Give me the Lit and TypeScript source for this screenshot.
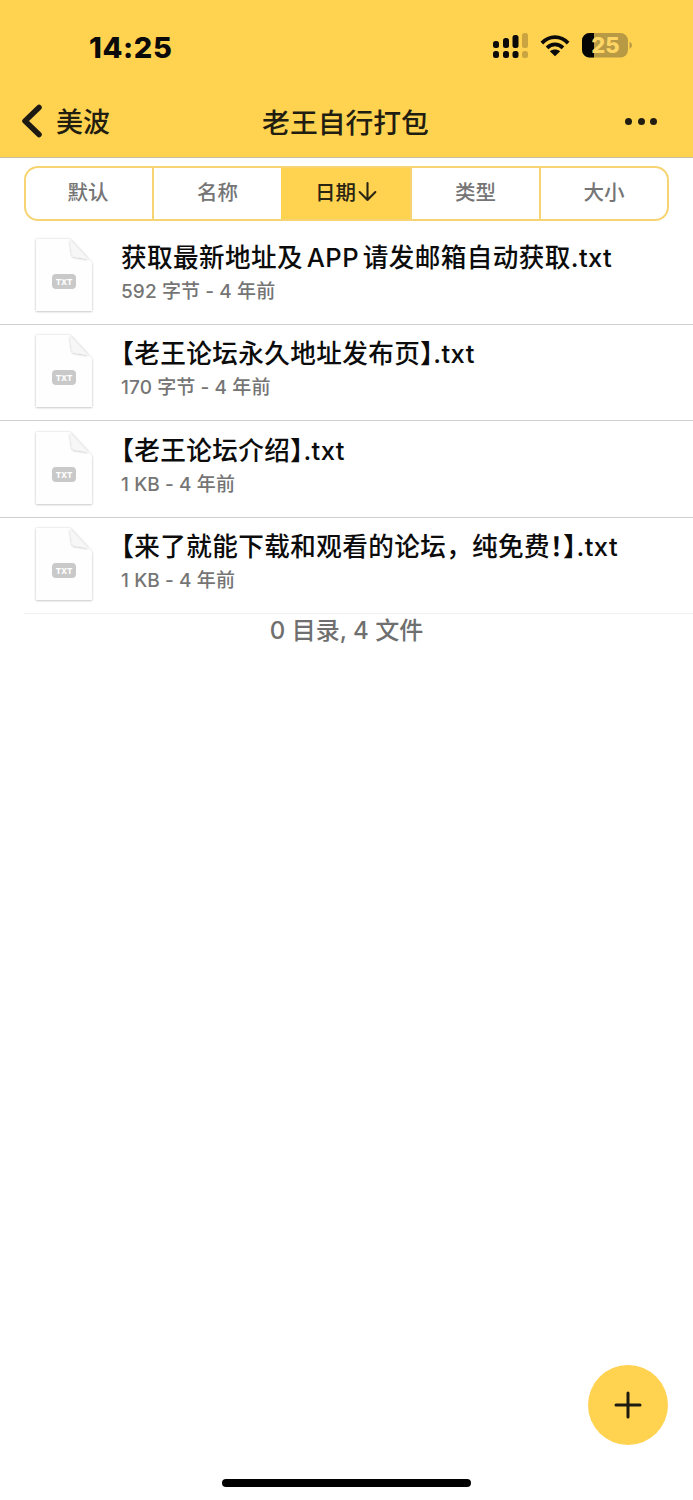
import { LitElement, html, css, svg } from 'lit'
import { customElement } from 'lit/decorators.js'
import { classMap } from 'lit/directives/class-map.js'

const tabs = [
  { label: '默认' },
  { label: '名称' },
  { label: '日期', active: true },
  { label: '类型' },
  { label: '大小' },
]

const files = [
  { name: '获取最新地址及 APP 请发邮箱自动获取.txt', meta: '592 字节 - 4 年前' },
  { name: '【老王论坛永久地址发布页】.txt', meta: '170 字节 - 4 年前' },
  { name: '【老王论坛介绍】.txt', meta: '1 KB - 4 年前' },
  { name: '【来了就能下载和观看的论坛，纯免费！】.txt', meta: '1 KB - 4 年前' },
]

const fileIcon = svg`
  <svg class="file-icon" viewBox="0 0 64 80" width="64" height="80">
    <defs>
      <filter id="soft" x="-20%" y="-20%" width="140%" height="140%">
        <feDropShadow dx="0" dy="0.500" stdDeviation="1.300" flood-color="#000" flood-opacity="0.3" />
      </filter>
    </defs>
    <path d="M4 3H38L60 27V75H4Z" fill="#fefefe" filter="url(#soft)" />
    <path d="M38 4Q39 14 40 19Q40.500 21 43 21L56 23Z" fill="#f7f7f7" filter="url(#soft)" />
    <rect x="20" y="38" width="24" height="15" rx="4" fill="#c9c9c9" />
    <text x="32" y="48.600" text-anchor="middle" class="file-ext">TXT</text>
  </svg>
`

// the full-width brackets and the bang are set half width in the list
const fileName = (name: string) =>
  name.split(/([【】！])/).map((part) => (/^[【】！]$/.test(part) ? html`<span class="punct">${part}</span>` : part))

@customElement('app-root')
export class AppRoot extends LitElement {
  static styles = css`
    :host {
      display: block;
      position: relative;
      height: 1500px;
      overflow: hidden;
      background: #fff;
      font-family: Inter, 'Noto Sans CJK SC', sans-serif;
      color: #111;
    }

    .top {
      background: #ffd250;
      border-bottom: 1px solid #c9c0a0;
      height: 157px;
    }

    .status {
      height: 94px;
      box-sizing: border-box;
      display: flex;
      align-items: center;
      justify-content: space-between;
      padding: 0 61px 3px 89px;
    }

    .time {
      font-size: 29px;
      font-weight: 800;
      color: #0a0a0a;
      letter-spacing: 0.6px;
      margin-top: 3px;
    }

    .status-icons {
      display: flex;
      align-items: center;
      gap: 12px;
    }

    .nav {
      height: 63px;
      display: grid;
      grid-template-columns: 1fr auto 1fr;
      align-items: center;
      padding: 0 36px 10px 21px;
      box-sizing: border-box;
      color: #211d10;
    }

    .back {
      display: flex;
      align-items: center;
      gap: 13px;
      font-size: 27px;
      font-weight: 500;
    }

    .title {
      font-size: 27.8px;
      font-weight: 500;
      margin-left: 13px;
    }

    .more {
      justify-self: end;
      display: flex;
      gap: 5.5px;
      margin-top: 2px;
    }

    .more span {
      width: 7px;
      height: 7px;
      border-radius: 50%;
      background: #211d10;
    }

    .tabs {
      display: grid;
      grid-template-columns: 126px 129px 129px 129px 1fr;
      margin: 8px 24px 0;
      height: 55px;
      box-sizing: border-box;
      border: 2px solid #f7d473;
      border-radius: 14px;
      overflow: hidden;
    }

    .tab {
      display: flex;
      align-items: center;
      justify-content: center;
      gap: 1px;
      padding-bottom: 5px;
      font-size: 20.5px;
      font-weight: 500;
      color: #757575;
      border-left: 2px solid #f7d473;
    }

    .tab:first-child {
      border-left: 0;
      padding-right: 2px;
    }

    .tab.active {
      background: #ffd250;
      border-left-color: #ffd250;
      color: #2a2513;
    }

    .list {
      margin-top: 7px;
    }

    .row {
      height: 96.5px;
      box-sizing: border-box;
      display: flex;
      align-items: center;
      padding: 0 0 2px 32px;
      gap: 25px;
      border-bottom: 1px solid #cfcfcf;
    }

    .row:last-child {
      margin-left: 24px;
      padding-left: 8px;
      border-bottom-color: #f1f1f1;
    }

    .file-icon {
      flex: none;
      margin-top: 2px;
    }

    .file-ext {
      font-size: 8px;
      font-weight: 800;
      fill: #fff;
    }

    .text {
      padding-bottom: 4px;
    }

    .name {
      font-size: 25.6px;
      font-weight: 500;
      color: #0c0c0c;
      white-space: nowrap;
      line-height: 34px;
      letter-spacing: 0.4px;
      word-spacing: -3.4px;
    }

    .punct {
      font-feature-settings: 'halt';
      font-weight: 700;
    }

    .meta {
      font-size: 19px;
      font-weight: 500;
      color: #757575;
      line-height: 26px;
      margin-top: 4px;
      letter-spacing: 0.1px;
    }

    .summary {
      text-align: center;
      font-size: 24px;
      font-weight: 500;
      color: #6f6f6f;
      line-height: 34px;
    }

    .fab {
      position: absolute;
      left: 588px;
      top: 1365px;
      width: 80px;
      height: 80px;
      border-radius: 50%;
      background: #ffd250;
      display: flex;
      align-items: center;
      justify-content: center;
    }

    .home-bar {
      position: absolute;
      left: 222px;
      top: 1479px;
      width: 249px;
      height: 8px;
      border-radius: 4px;
      background: #000;
    }
  `

  private renderSignal() {
    return html`
      <svg width="35" height="25" viewBox="0 0 35 25">
        <g fill="#0a0a0a">
          <rect x="0" y="8" width="6" height="7" rx="2.500" />
          <rect x="10" y="5" width="6" height="10" rx="2.500" />
          <rect x="19.500" y="2" width="6" height="13" rx="2.500" />
          <rect x="0" y="18" width="6" height="7" rx="2.500" />
          <rect x="10" y="18" width="6" height="7" rx="2.500" />
          <rect x="19.500" y="18" width="6" height="7" rx="2.500" />
        </g>
        <g fill="#c9a441">
          <rect x="29" y="0" width="6" height="15" rx="2.500" />
          <rect x="29" y="18" width="6" height="7" rx="2.500" />
        </g>
      </svg>
    `
  }

  private renderWifi() {
    return html`
      <svg width="30" height="23" viewBox="0 0 32 24" fill="none" stroke="#0a0a0a" stroke-width="4">
        <path d="M2 9.500C10 1 22 1 30 9.500" />
        <path d="M7.500 14.500C12.500 9.500 19.500 9.500 24.500 14.500" />
        <path d="M16 23.500L10.500 18C13.500 15.600 18.500 15.600 21.500 18Z" fill="#0a0a0a" stroke="none" />
      </svg>
    `
  }

  private renderBattery() {
    return html`
      <svg width="50" height="25" viewBox="0 0 50 25">
        <rect x="0" y="0" width="46" height="24.500" rx="7.500" fill="#b89a45" />
        <path d="M7.500 0H12V24.500H7.500A7.500 7.500 0 0 1 0 17V7.500A7.500 7.500 0 0 1 7.500 0Z" fill="#050505" />
        <path d="M47.500 8.500Q50 10 50 12.250Q50 14.500 47.500 16Z" fill="#b89a45" />
        <text x="23.500" y="19.500" text-anchor="middle" font-size="22" font-weight="800" fill="#ffd664">25</text>
      </svg>
    `
  }

  render() {
    return html`
      <header class="top">
        <div class="status">
          <span class="time">14:25</span>
          <div class="status-icons">${this.renderSignal()}${this.renderWifi()}${this.renderBattery()}</div>
        </div>
        <nav class="nav">
          <div class="back">
            <svg width="22" height="34" viewBox="0 0 22 34" fill="none" stroke="#1c1a12" stroke-width="5.500" stroke-linecap="round" stroke-linejoin="round">
              <path d="M18 3.500L4 17L18 30.500" />
            </svg>
            <span>美波</span>
          </div>
          <div class="title">老王自行打包</div>
          <div class="more"><span></span><span></span><span></span></div>
        </nav>
      </header>

      <div class="tabs">
        ${tabs.map(
          (t) => html`
            <div class=${classMap({ tab: true, active: !!t.active })}>
              ${t.label}
              ${t.active
                ? html`<svg width="21" height="21" viewBox="0 0 20 20" fill="none" stroke="#2a2513" stroke-width="2" stroke-linecap="round" stroke-linejoin="round">
                    <path d="M10 2V18M2.500 10.500L10 18L17.500 10.500" />
                  </svg>`
                : ''}
            </div>
          `,
        )}
      </div>

      <div class="list">
        ${files.map(
          (f) => html`
            <div class="row">
              ${fileIcon}
              <div class="text">
                <div class="name">${fileName(f.name)}</div>
                <div class="meta">${f.meta}</div>
              </div>
            </div>
          `,
        )}
      </div>
      <div class="summary">0 目录, 4 文件</div>

      <div class="fab">
        <svg width="28" height="28" viewBox="0 0 28 28" stroke="#1d1a10" stroke-width="3" stroke-linecap="round">
          <path d="M14 2V26M2 14H26" />
        </svg>
      </div>
      <div class="home-bar"></div>
    `
  }
}

declare global {
  interface HTMLElementTagNameMap {
    'app-root': AppRoot
  }
}
